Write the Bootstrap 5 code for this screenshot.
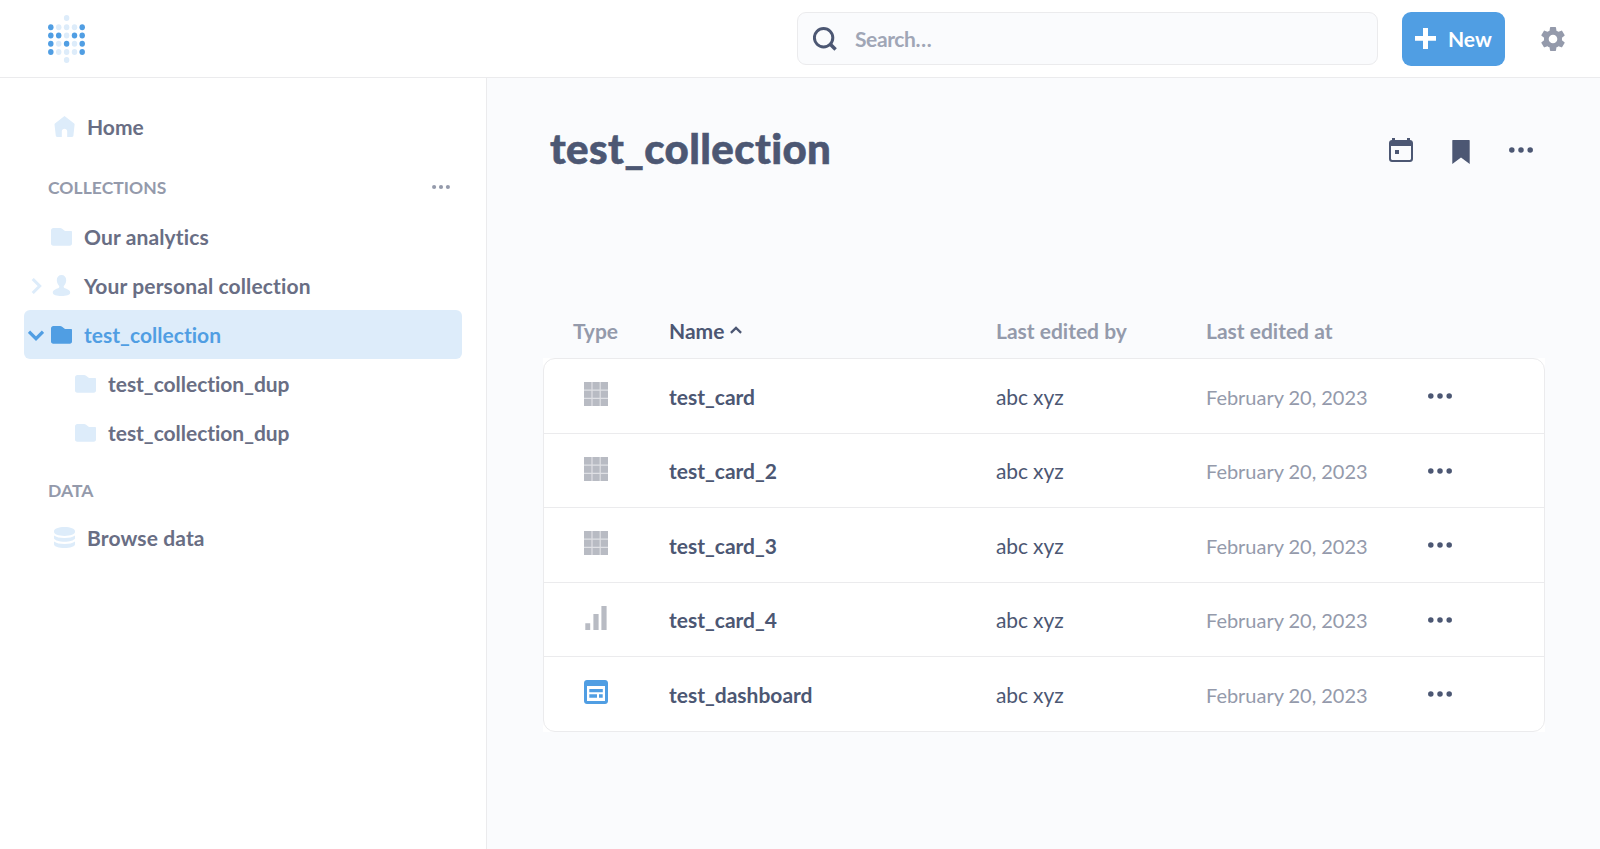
<!DOCTYPE html>
<html lang="en">
<head>
<meta charset="utf-8">
<title>test_collection</title>
<meta name="viewport" content="width=device-width, initial-scale=1">
<link href="https://cdn.jsdelivr.net/npm/bootstrap@5.3.0/dist/css/bootstrap.min.css" rel="stylesheet">
<style>
  :root { --brand: #509ee3; --brand-light: #ddecfa; --ink: #4c5773; --ink-mid: #696e84; --ink-light: #949aab; --line: #ebebed; --page: #fafbfd; }
  body { font-family: Lato, sans-serif; font-size: 21px; line-height: 25px; color: var(--ink); background: #fff; overflow: hidden; font-variant-ligatures: none; }
  svg { display: block; flex: none; fill: currentColor; }
  a { color: inherit; text-decoration: none; }
  .app-bar { height: 78px; border-bottom: 1px solid var(--line); padding: 12px 35px 0 48px; }
  .search-box { width: 581px; height: 53px; border: 1px solid var(--line); border-radius: 9px; background: var(--page); padding: 0 15px; gap: 18px; }
  .search-box input { font-size: 21px; line-height: 25px; font-weight: 700; background: none; padding: 0; letter-spacing: -.4px; }
  .search-box input::placeholder { color: #a0a6b6; opacity: 1; }
  .btn-new { height: 54px; width: 103px; border-radius: 9px; background: var(--brand); color: #fff; font-size: 21px; line-height: 25px; font-weight: 700; padding: 0 0 2px 13px; gap: 12px; margin: 0 36px 0 24px; }
  .side-nav { width: 487px; border-right: 1px solid var(--line); padding: 25px 24px 0; font-weight: 700; color: var(--ink-mid); }
  .side-item { height: 49px; border-radius: 6px; padding: 0 0 0 27px; gap: 12px; letter-spacing: .13px; }
  .side-item.top-level { padding-left: 30px; }
  .side-item.home { padding-bottom: 2px; letter-spacing: 0; }
  .side-item.has-arrow { padding-left: 4px; gap: 0; }
  .side-item.child { padding-left: 51px; letter-spacing: -.03px; }
  .side-item.selected { background: var(--brand-light); color: var(--brand); letter-spacing: .03px; }
  .side-item svg { color: var(--brand-light); }
  .side-item svg.folder { margin-top: 1px; }
  .side-item.selected svg { color: var(--brand); }
  .arrow-slot { width: 16px; margin-right: 7px; }
  .side-heading { font-size: 17.5px; line-height: 21px; color: var(--ink-light); padding: 0 12px 0 24px; letter-spacing: .05px; }
  .page-area { background: var(--page); padding: 44px 55px 0 56px; }
  h1 { font-size: 42px; line-height: 50px; font-weight: 900; margin: 0; letter-spacing: .38px; -webkit-text-stroke: .6px; }
  .list-grid { display: grid; grid-template-columns: 126px 327px 210px 221px 1fr; padding-left: 0; }
  .list-head { font-weight: 700; color: var(--ink-light); height: 39px; }
  .list-head > div { margin-top: -1px; }
  .list-frame { background: #fff; }
  .list-body { border: 1px solid var(--line); border-radius: 12px; }
  .list-line { grid-template-columns: 125px 327px 210px 222px 1fr; height: 75px; border-bottom: 1px solid var(--line); padding-top: 23px; }
  .list-line:nth-child(even) { height: 74px; }
  .list-line:last-child { height: 74px; border-bottom: 0; }
  .list-line > :not(.icon-cell) { margin-top: 2px; }
  .list-line:nth-child(even) > :not(.icon-cell):not(.more) { margin-top: 1px; }
  .icon-cell { padding-left: 40px; color: #b8bbc3; }
  .editor { letter-spacing: -.12px; }
  .list-line > .date { font-size: 20px; color: var(--ink-light); padding-top: 1px; letter-spacing: -.03px; }
</style>
</head>
<body class="vh-100 d-flex flex-column">

<svg width="0" height="0" class="position-absolute" aria-hidden="true">
  <symbol id="i-folder" viewBox="0 0 21 18"><path d="M2.400 0H9c.9 0 1.500.2 2.100.7l2.200 1.700c.5.400 1 .6 1.700.6h5.200c.5 0 .8.300.8.800v11.700c0 1.300-.9 2.200-2.200 2.200H2.300C.9 17.700 0 16.800 0 15.500V2.400C0 1 1 0 2.400 0z"/></symbol>
  <symbol id="i-dots" viewBox="0 0 24 24"><circle cx="2.800" cy="12" r="2.750"/><circle cx="12" cy="12" r="2.750"/><circle cx="21.200" cy="12" r="2.750"/></symbol>
  <symbol id="i-table" viewBox="0 0 24 24"><path fill-opacity=".45" d="M0 0h24v24H0z"/><path d="M0 0h7.400v7.400H0zM8.600 0h7v7.400h-7zM16.800 0H24v7.400h-7.200zM0 8.700h7.400v7H0zM8.600 8.700h7v7h-7zM16.800 8.700H24v7h-7.200zM0 17h7.400v7H0zM8.600 17h7v7h-7zM16.800 17H24v7h-7.200z"/></symbol>
</svg>

<header class="app-bar d-flex align-items-start flex-shrink-0">
  <a href="#" class="me-auto" aria-label="Home">
    <svg width="37" height="52" viewBox="48 12 37 52">
      <g fill="#ddecfa">
        <ellipse cx="66.600" cy="17.900" rx="2.750" ry="3"/>
        <ellipse cx="58.700" cy="27.300" rx="2.750" ry="3"/><ellipse cx="66.600" cy="27.300" rx="2.750" ry="3"/><ellipse cx="74.500" cy="27.300" rx="2.750" ry="3"/>
        <ellipse cx="66.600" cy="35.600" rx="2.750" ry="3"/>
        <ellipse cx="58.700" cy="43.800" rx="2.750" ry="3"/><ellipse cx="74.500" cy="43.800" rx="2.750" ry="3"/>
        <ellipse cx="58.700" cy="52" rx="2.750" ry="3"/><ellipse cx="66.600" cy="52" rx="2.750" ry="3"/><ellipse cx="74.500" cy="52" rx="2.750" ry="3"/>
        <ellipse cx="66.600" cy="60.100" rx="2.750" ry="3"/>
      </g>
      <g fill="#509ee3">
        <ellipse cx="50.800" cy="27.300" rx="2.750" ry="3"/><ellipse cx="82.200" cy="27.300" rx="2.750" ry="3"/>
        <ellipse cx="50.800" cy="35.600" rx="2.750" ry="3"/><ellipse cx="58.700" cy="35.600" rx="2.750" ry="3"/><ellipse cx="74.500" cy="35.600" rx="2.750" ry="3"/><ellipse cx="82.200" cy="35.600" rx="2.750" ry="3"/>
        <ellipse cx="50.800" cy="43.800" rx="2.750" ry="3"/><ellipse cx="66.600" cy="43.800" rx="2.750" ry="3"/><ellipse cx="82.200" cy="43.800" rx="2.750" ry="3"/>
        <ellipse cx="50.800" cy="52" rx="2.750" ry="3"/><ellipse cx="82.200" cy="52" rx="2.750" ry="3"/>
      </g>
    </svg>
  </a>
  <div class="search-box d-flex align-items-center">
    <svg width="24" height="24" viewBox="0 0 24 24" style="fill:none" stroke="currentColor"><circle cx="10.600" cy="10.700" r="9.200" stroke-width="3"/><path d="M17.300 17.300l5.300 5.300" stroke-width="3.500"/></svg>
    <input class="form-control border-0 shadow-none" type="text" placeholder="Search…">
  </div>
  <button class="btn btn-new d-flex align-items-center border-0">
    <svg width="21" height="21" viewBox="0 0 21 21"><path d="M8 0h5v8h8v4.800h-8V21H8v-8.200H0V8h8z"/></svg>
    New
  </button>
  <svg width="24" height="24" viewBox="2 2 20 20" color="#949aab" style="margin-top:15px"><path d="M19.430 12.980c.04-.32.070-.64.070-.98s-.03-.66-.07-.98l2.110-1.650c.19-.15.240-.42.120-.64l-2-3.460c-.12-.22-.39-.3-.61-.22l-2.490 1c-.52-.4-1.080-.73-1.690-.98l-.38-2.650C14.460 2.180 14.250 2 14 2h-4c-.25 0-.46.180-.49.420l-.38 2.650c-.61.250-1.170.590-1.690.98l-2.490-1c-.23-.09-.49 0-.61.220l-2 3.460c-.13.220-.07.490.120.640l2.110 1.650c-.04.320-.07.650-.07.980s.03.660.070.980l-2.110 1.650c-.19.150-.24.420-.12.640l2 3.460c.12.220.39.300.61.220l2.490-1c.52.400 1.080.730 1.690.980l.38 2.650c.03.240.24.420.49.420h4c.25 0 .46-.18.490-.42l.38-2.650c.61-.25 1.170-.59 1.690-.98l2.490 1c.23.090.49 0 .61-.22l2-3.460c.12-.22.070-.49-.12-.64l-2.110-1.650zM12 15.600a3.600 3.600 0 1 1 0-7.200 3.600 3.600 0 0 1 0 7.200z"/></svg>
</header>

<div class="d-flex flex-grow-1">
  <nav class="side-nav flex-shrink-0">
    <a href="#" class="side-item top-level home d-flex align-items-center">
      <svg width="21" height="21" viewBox="0 0 21 21"><path d="M10.500 0l9.700 7.600c.3.300.4.600.4.900l-1.200 11.300c-.1.700-.6 1.200-1.300 1.200h-4.900v-5.600c0-1.500-1.200-2.600-2.700-2.600s-2.700 1.100-2.700 2.600V21H3.100c-.7 0-1.200-.5-1.300-1.200L.5 8.500c0-.3.1-.6.400-.9z"/></svg>
      Home
    </a>
    <div class="side-heading d-flex justify-content-between align-items-start" style="margin:25px 0 14px">
      COLLECTIONS
      <svg width="18" height="18" style="margin-top:1px"><use href="#i-dots"/></svg>
    </div>
    <a href="#" class="side-item d-flex align-items-center"><svg class="folder" width="21" height="18"><use href="#i-folder"/></svg>Our analytics</a>
    <a href="#" class="side-item has-arrow d-flex align-items-center">
      <svg class="arrow-slot" height="16" viewBox="0 0 16 16" style="fill:none" stroke="currentColor" stroke-width="3"><path d="M4.700 1l7 7-7 7"/></svg>
      <svg width="21" height="21" viewBox="0 0 21 21" style="margin-right:12px"><path d="M10.500 0c2.800 0 4.700 2 4.700 5 0 2.600-1 4.400-2 5.500-.9 1-.6 2.300.7 2.800 2.800 1 5.300 1.900 5.300 4.500 0 2.200-4 3.200-8.700 3.200s-8.700-1-8.700-3.200c0-2.600 2.500-3.500 5.300-4.500 1.300-.5 1.600-1.800.7-2.800-1-1.100-2-2.900-2-5.500 0-3 1.900-5 4.700-5z"/></svg>
      Your personal collection
    </a>
    <a href="#" class="side-item has-arrow selected d-flex align-items-center">
      <svg class="arrow-slot" height="16" viewBox="0 0 16 16" style="fill:none" stroke="currentColor" stroke-width="3.200"><path d="M1 4.700l7 7 7-7"/></svg>
      <svg class="folder" width="21" height="18" style="margin-right:12px"><use href="#i-folder"/></svg>
      test_collection
    </a>
    <a href="#" class="side-item child d-flex align-items-center"><svg class="folder" width="21" height="18"><use href="#i-folder"/></svg>test_collection_dup</a>
    <a href="#" class="side-item child d-flex align-items-center"><svg class="folder" width="21" height="18"><use href="#i-folder"/></svg>test_collection_dup</a>
    <div class="side-heading" style="margin:23px 0 12px">DATA</div>
    <a href="#" class="side-item top-level d-flex align-items-center">
      <svg width="21" height="21" viewBox="0 0 21 21"><path d="M0 4c0-2.300 4.500-4 10.500-4S21 1.700 21 4v1c0 2.200-4.500 3.900-10.500 3.900S0 7.200 0 5zM0 8.600c2 1.700 6 2.500 10.500 2.500S19 10.300 21 8.600v2.900c-1.200 2-5.300 3.200-10.500 3.200S1.200 13.500 0 11.500zM0 14.400c2 1.700 6 2.500 10.500 2.500s8.500-.8 10.500-2.500v3c-.4 2.100-4.700 3.600-10.500 3.600S.4 19.500 0 17.400z"/></svg>
      Browse data
    </a>
  </nav>

  <main class="page-area flex-grow-1">
    <div class="d-flex align-items-start" style="padding:1px 12px 0 7px;height:197px">
      <h1 class="me-auto">test_collection</h1>
      <div class="d-flex" style="gap:36px;padding-top:15px">
        <svg width="24" height="24" viewBox="0 0 24 24"><path fill-rule="evenodd" d="M3 0h3v2h12V0h3v2c1.700 0 3 1.300 3 3v16c0 1.700-1.300 3-3 3H3c-1.700 0-3-1.300-3-3V5c0-1.700 1.300-3 3-3zM2 8v12.500c0 .9.600 1.500 1.500 1.500h17c.9 0 1.500-.6 1.500-1.500V8zM6 12h4v4H6z"/></svg>
        <svg width="24" height="26" viewBox="0 0 24 26"><path d="M3.800 2h16.400c.3 0 .5.200.5.500V26L12 19.500 3.300 26V2.500c0-.3.200-.5.500-.5z"/></svg>
        <svg width="24" height="24"><use href="#i-dots"/></svg>
      </div>
    </div>

    <div class="list-grid list-head">
      <div style="padding-left:30px">Type</div>
      <div class="d-flex" style="color:var(--ink);gap:6px">Name
        <svg width="12" height="8" viewBox="0 0 12 8" style="fill:none;margin-top:8px" stroke="currentColor" stroke-width="2.300"><path d="M.9 6.900L6 1.900l5.100 5"/></svg>
      </div>
      <div>Last edited by</div>
      <div>Last edited at</div>
    </div>

    <div class="list-frame">
      <div class="list-body">
        <div class="list-grid list-line">
          <div class="icon-cell"><svg width="24" height="24"><use href="#i-table"/></svg></div>
          <a href="#" class="fw-bold">test_card</a><div class="editor">abc xyz</div><div class="date">February 20, 2023</div>
          <svg class="more" width="24" height="24"><use href="#i-dots"/></svg>
        </div>
        <div class="list-grid list-line">
          <div class="icon-cell"><svg width="24" height="24"><use href="#i-table"/></svg></div>
          <a href="#" class="fw-bold">test_card_2</a><div class="editor">abc xyz</div><div class="date">February 20, 2023</div>
          <svg class="more" width="24" height="24"><use href="#i-dots"/></svg>
        </div>
        <div class="list-grid list-line">
          <div class="icon-cell"><svg width="24" height="24"><use href="#i-table"/></svg></div>
          <a href="#" class="fw-bold">test_card_3</a><div class="editor">abc xyz</div><div class="date">February 20, 2023</div>
          <svg class="more" width="24" height="24"><use href="#i-dots"/></svg>
        </div>
        <div class="list-grid list-line">
          <div class="icon-cell"><svg width="24" height="24" viewBox="0 0 24 24"><path d="M1.300 17.200h4.900V24H1.300zM9.400 8h5.200v16H9.400zM17.400 0h5.200v24h-5.200z"/></svg></div>
          <a href="#" class="fw-bold">test_card_4</a><div class="editor">abc xyz</div><div class="date">February 20, 2023</div>
          <svg class="more" width="24" height="24"><use href="#i-dots"/></svg>
        </div>
        <div class="list-grid list-line">
          <div class="icon-cell"><svg width="24" height="24" viewBox="0 0 24 24" color="#509ee3"><path fill-rule="evenodd" d="M3 0h18c1.700 0 3 1.300 3 3v18c0 1.700-1.300 3-3 3H3c-1.700 0-3-1.300-3-3V3c0-1.700 1.300-3 3-3zM3 6v15h18V6zM5.300 9h13.500v3.200H5.300zM5.300 14.300H13v3.500H5.300zM15 14.300h3.700v3.500H15z"/></svg></div>
          <a href="#" class="fw-bold">test_dashboard</a><div class="editor">abc xyz</div><div class="date">February 20, 2023</div>
          <svg class="more" width="24" height="24"><use href="#i-dots"/></svg>
        </div>
      </div>
    </div>
  </main>
</div>

<script src="https://cdn.jsdelivr.net/npm/bootstrap@5.3.0/dist/js/bootstrap.bundle.min.js"></script>
</body>
</html>
